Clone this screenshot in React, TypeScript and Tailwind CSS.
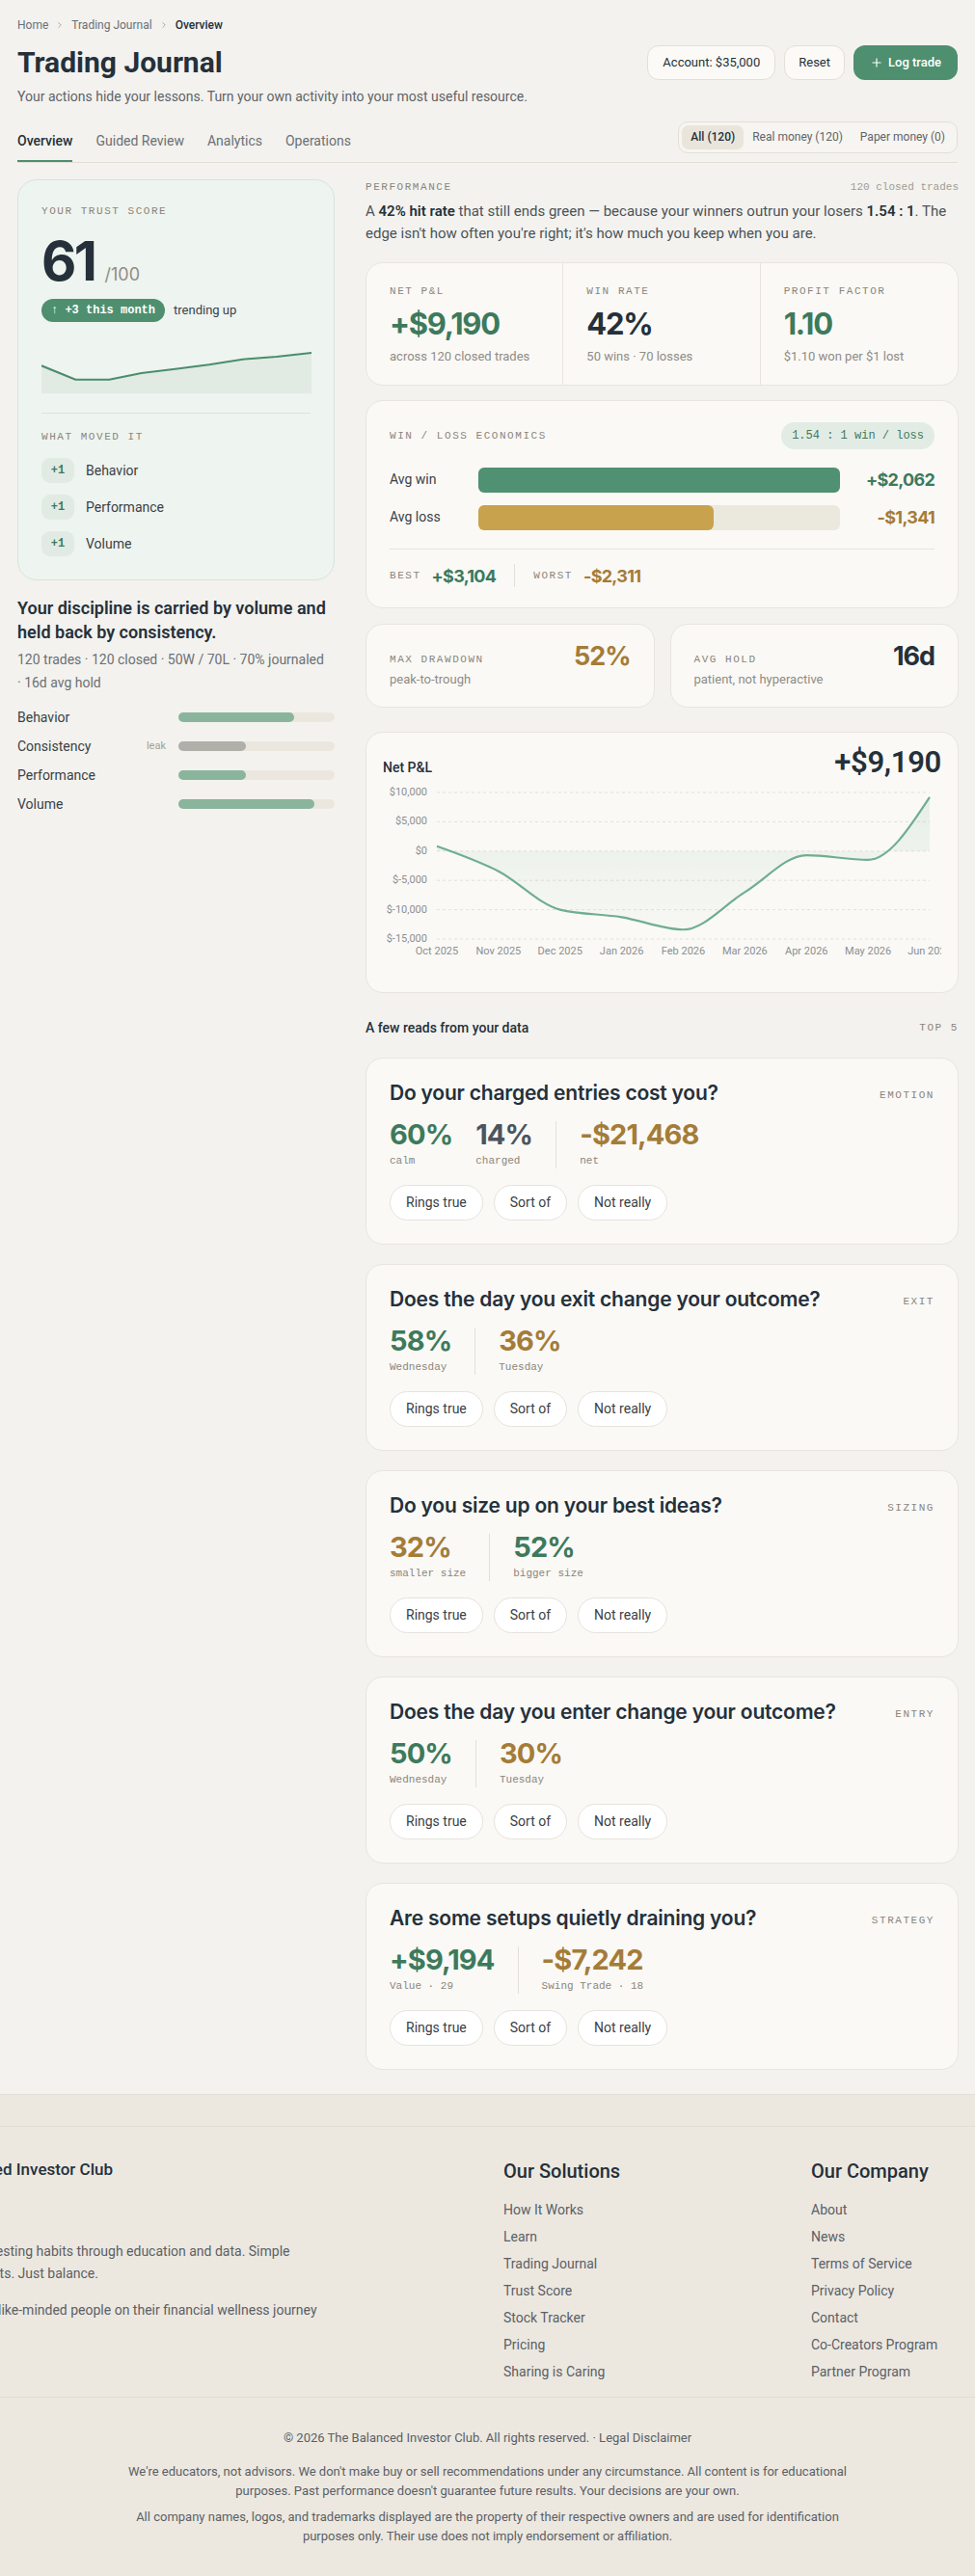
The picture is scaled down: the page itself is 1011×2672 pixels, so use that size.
import { ChevronRight, Plus } from 'lucide-react';

const mono = "font-['Liberation_Mono',monospace]";
const num = "font-['Inter',sans-serif]";

const green = 'text-[#3d7a5c]';
const gold = 'text-[#a47c38]';
const slate = 'text-[#4a5560]';

const moved = ['Behavior', 'Performance', 'Volume'];

const discipline = [
  { name: 'Behavior', pct: 74, fill: 'bg-[#8ab59c]', leak: false },
  { name: 'Consistency', pct: 43, fill: 'bg-[#b1afaa]', leak: true },
  { name: 'Performance', pct: 43, fill: 'bg-[#8ab59c]', leak: false },
  { name: 'Volume', pct: 87, fill: 'bg-[#8ab59c]', leak: false },
];

const reads = [
  {
    q: 'Do your charged entries cost you?',
    tag: 'EMOTION',
    groups: [
      [
        { v: '60%', l: 'calm', c: green },
        { v: '14%', l: 'charged', c: slate },
      ],
      [{ v: '-$21,468', l: 'net', c: gold }],
    ],
  },
  {
    q: 'Does the day you exit change your outcome?',
    tag: 'EXIT',
    groups: [[{ v: '58%', l: 'Wednesday', c: green }], [{ v: '36%', l: 'Tuesday', c: gold }]],
  },
  {
    q: 'Do you size up on your best ideas?',
    tag: 'SIZING',
    groups: [[{ v: '32%', l: 'smaller size', c: gold }], [{ v: '52%', l: 'bigger size', c: green }]],
  },
  {
    q: 'Does the day you enter change your outcome?',
    tag: 'ENTRY',
    groups: [[{ v: '50%', l: 'Wednesday', c: green }], [{ v: '30%', l: 'Tuesday', c: gold }]],
  },
  {
    q: 'Are some setups quietly draining you?',
    tag: 'STRATEGY',
    groups: [[{ v: '+$9,194', l: 'Value · 29', c: green }], [{ v: '-$7,242', l: 'Swing Trade · 18', c: gold }]],
  },
];

const solutions = ['How It Works', 'Learn', 'Trading Journal', 'Trust Score', 'Stock Tracker', 'Pricing', 'Sharing is Caring'];
const company = ['About', 'News', 'Terms of Service', 'Privacy Policy', 'Contact', 'Co-Creators Program', 'Partner Program'];

// chart geometry (svg coords)
const months = ['Oct 2025', 'Nov 2025', 'Dec 2025', 'Jan 2026', 'Feb 2026', 'Mar 2026', 'Apr 2026', 'May 2026', 'Jun 2026'];
const pnl = [840, -3440, -10000, -11270, -13400, -7000, -700, -1500, 9190];
const ticks = [10000, 5000, 0, -5000, -10000, -15000];
const X = (i: number) => 56 + i * 63.875;
const Y = (v: number) => 10 + (10000 - v) * 0.00608;

function monotone(pts: [number, number][]) {
  const n = pts.length;
  const h: number[] = [];
  const s: number[] = [];
  const t: number[] = new Array(n).fill(0);
  for (let i = 0; i < n - 1; i++) {
    h[i] = pts[i + 1][0] - pts[i][0];
    s[i] = (pts[i + 1][1] - pts[i][1]) / h[i];
  }
  for (let i = 1; i < n - 1; i++) {
    const p = (s[i - 1] * h[i] + s[i] * h[i - 1]) / (h[i - 1] + h[i]);
    t[i] = (Math.sign(s[i - 1]) + Math.sign(s[i])) * Math.min(Math.abs(s[i - 1]), Math.abs(s[i]), 0.5 * Math.abs(p)) || 0;
  }
  t[0] = (3 * s[0] - t[1]) / 2;
  t[n - 1] = (3 * s[n - 2] - t[n - 2]) / 2;
  let d = `M${pts[0][0]},${pts[0][1]}`;
  for (let i = 0; i < n - 1; i++) {
    const dx = h[i] / 3;
    d += ` C${pts[i][0] + dx},${pts[i][1] + dx * t[i]} ${pts[i + 1][0] - dx},${pts[i + 1][1] - dx * t[i + 1]} ${pts[i + 1][0]},${pts[i + 1][1]}`;
  }
  return d;
}

function PnlChart() {
  const pts = pnl.map((v, i) => [X(i), Y(v)] as [number, number]);
  const line = monotone(pts);
  const area = `${line} L${X(8)},${Y(0)} L${X(0)},${Y(0)} Z`;
  const fmt = (v: number) => (v < 0 ? `$-${Math.abs(v).toLocaleString('en-US')}` : `$${v.toLocaleString('en-US')}`);
  return (
    <svg width="579" height="190" className="mt-[3px] block">
      <defs>
        <linearGradient id="pnlFill" x1="0" y1="0" x2="0" y2="1">
          <stop offset="0" stopColor="#6fae8f" stopOpacity="0.14" />
          <stop offset="1" stopColor="#6fae8f" stopOpacity="0.02" />
        </linearGradient>
      </defs>
      {ticks.map((v) => (
        <g key={v}>
          <line x1="56" x2="567" y1={Y(v)} y2={Y(v)} stroke="#e3e0d9" strokeDasharray="3 3" />
          <text x="46" y={Y(v)} textAnchor="end" dominantBaseline="middle" fontSize="11" fill="#8d8f91" fontFamily="Roboto">
            {fmt(v)}
          </text>
        </g>
      ))}
      <path d={area} fill="url(#pnlFill)" />
      <path d={line} fill="none" stroke="#6fae8f" strokeWidth="2.2" />
      {months.map((m, i) => (
        <text key={m} x={X(i)} y="175" textAnchor="middle" dominantBaseline="middle" fontSize="11" fill="#8d8f91" fontFamily="Roboto">
          {m}
        </text>
      ))}
    </svg>
  );
}

function Sparkline() {
  const pts = [
    [0, 23.3], [35.3, 37.7], [70.3, 37.7], [103.7, 31], [138.7, 26.7], [173.7, 22.3], [208.7, 16.7], [243.7, 14], [280, 10],
  ];
  const d = pts.map((p) => p.join(',')).join(' ');
  return (
    <svg width="280" height="52" className="mt-[22px] block">
      <polygon points={`${d} 280,52 0,52`} fill="#e1ebe4" />
      <polyline points={d} fill="none" stroke="#4a8d6c" strokeWidth="2" strokeLinejoin="round" />
    </svg>
  );
}

function Label({ children, className = '' }: { children: React.ReactNode; className?: string }) {
  return <div className={`${mono} text-[11px] leading-4 tracking-[0.14em] text-[#8b857b] ${className}`}>{children}</div>;
}

function LeftColumn() {
  return (
    <div>
      <div className="rounded-[20px] border border-[#d5e5da] bg-[#eef4ef] p-6">
        <Label>YOUR TRUST SCORE</Label>
        <div className="mt-[16px] flex items-baseline">
          <span className={`${num} text-[56px] leading-[56px] font-bold tracking-[-0.045em] text-[#25303a]`}>61</span>
          <span className={`${num} ml-[10px] text-[18px] text-[#928c83]`}>/100</span>
        </div>
        <div className="mt-[11px] flex items-center">
          <span className={`${mono} rounded-full bg-[#4e8f6f] px-[10px] text-[12px] leading-6 font-bold text-white`}>↑ +3 this month</span>
          <span className="ml-[9px] text-[13px] text-[#3a4147]">trending up</span>
        </div>
        <Sparkline />
        <div className="mt-[20px] border-t border-[#d9e5dc]" />
        <Label className="mt-[16px]">WHAT MOVED IT</Label>
        <div className="mt-[14px] flex flex-col gap-[12px]">
          {moved.map((m) => (
            <div key={m} className="flex items-center">
              <span className={`${mono} flex h-[26px] w-[34px] items-center justify-center rounded-[9px] bg-[#e1ebe4] text-[12px] font-bold text-[#3d7a5c]`}>+1</span>
              <span className="ml-[12px] text-[14px] text-[#3a4147]">{m}</span>
            </div>
          ))}
        </div>
      </div>
      <h2 className="mt-[16px] text-[18px] leading-[25px] font-semibold text-[#25303a]">
        Your discipline is carried by volume and held back by consistency.
      </h2>
      <p className="mt-[4px] text-[14px] leading-6 text-[#6b7075]">
        120 trades · 120 closed · 50W / 70L · 70% journaled <span className="whitespace-nowrap">· 16d avg hold</span>
      </p>
      <div className="mt-[14px] flex flex-col gap-[10px]">
        {discipline.map((d) => (
          <div key={d.name} className="flex h-5 items-center">
            <span className="flex-1 text-[14px] text-[#3a4147]">{d.name}</span>
            {d.leak && <span className="mr-[13px] text-[11px] text-[#a3a09a]">leak</span>}
            <div className="h-[10px] w-[162px] rounded-full bg-[#ebe7df]">
              <div className={`h-full rounded-full ${d.fill}`} style={{ width: `${d.pct}%` }} />
            </div>
          </div>
        ))}
      </div>
    </div>
  );
}

function Card({ children, className = '' }: { children: React.ReactNode; className?: string }) {
  return <div className={`rounded-[18px] border border-[#e8e5de] bg-[#faf9f6] ${className}`}>{children}</div>;
}

function ReadCard({ r }: { r: (typeof reads)[number] }) {
  return (
    <Card className="px-6 pt-[22px] pb-[24px]">
      <div className="flex items-center justify-between">
        <h3 className={`${num} text-[21px] leading-[28px] font-semibold tracking-[-0.01em] text-[#25303a]`}>{r.q}</h3>
        <span className={`${mono} mt-[4px] text-[11px] tracking-[0.14em] text-[#8b857b]`}>{r.tag}</span>
      </div>
      <div className="mt-[15px] flex">
        {r.groups.map((g, gi) => (
          <div key={gi} className={`flex gap-6 pr-6 ${gi > 0 ? 'border-l border-[#e3e0d9] pl-6' : ''}`}>
            {g.map((s) => (
              <div key={s.v}>
                <div className={`${num} text-[29px] leading-[28px] font-bold tracking-[-0.03em] ${s.c}`}>{s.v}</div>
                <div className={`${mono} mt-[5px] text-[11px] leading-4 text-[#8b857b]`}>{s.l}</div>
              </div>
            ))}
          </div>
        ))}
      </div>
      <div className="mt-[17px] flex gap-[11px]">
        {['Rings true', 'Sort of', 'Not really'].map((b) => (
          <button key={b} className="h-[37px] rounded-full border border-[#e6e3dc] bg-white px-[16px] text-[14px] text-[#3a4147]">
            {b}
          </button>
        ))}
      </div>
    </Card>
  );
}

function RightColumn() {
  return (
    <div>
      <div className="flex items-center justify-between">
        <Label>PERFORMANCE</Label>
        <span className={`${mono} text-[11px] leading-4 text-[#a19c93]`}>120 closed trades</span>
      </div>
      <p className="mt-[6px] text-[15px] leading-[23px] text-[#4b5359]">
        A <b className="font-semibold text-[#25303a]">42% hit rate</b> that still ends green — because your winners outrun your losers{' '}
        <b className="font-semibold text-[#25303a]">1.54 : 1</b>. The edge isn't how often you're right; it's how much you keep when you are.
      </p>

      <Card className="mt-[18px] grid grid-cols-3 divide-x divide-[#e8e5de]">
        {[
          { l: 'NET P&L', v: '+$9,190', c: green, s: 'across 120 closed trades' },
          { l: 'WIN RATE', v: '42%', c: 'text-[#25303a]', s: '50 wins · 70 losses' },
          { l: 'PROFIT FACTOR', v: '1.10', c: green, s: '$1.10 won per $1 lost' },
        ].map((k) => (
          <div key={k.l} className="px-6 pt-[21px] pb-[19px]">
            <Label>{k.l}</Label>
            <div className={`${num} mt-[10px] text-[31px] leading-[32px] font-bold tracking-[-0.04em] ${k.c}`}>{k.v}</div>
            <div className="mt-[8px] text-[13px] leading-5 text-[#8f8c85]">{k.s}</div>
          </div>
        ))}
      </Card>

      <Card className="mt-[15px] px-6 pt-[22px] pb-[21px]">
        <div className="flex items-center justify-between">
          <Label>WIN / LOSS ECONOMICS</Label>
          <span className={`${mono} rounded-full bg-[#e2ece5] px-[11px] text-[12px] leading-[28px] text-[#3d7a5c]`}>1.54 : 1 win / loss</span>
        </div>
        <div className="mt-[18px] flex flex-col gap-[12px]">
          {[
            { l: 'Avg win', pct: 100, fill: 'bg-[#4f9172]', v: '+$2,062', c: green },
            { l: 'Avg loss', pct: 65, fill: 'bg-[#c9a24e]', v: '-$1,341', c: gold },
          ].map((r) => (
            <div key={r.l} className="flex items-center">
              <span className="w-[92px] text-[14px] text-[#3a4147]">{r.l}</span>
              <div className="h-[26px] flex-1 rounded-[6px] bg-[#ebe8de]">
                <div className={`h-full rounded-[6px] ${r.fill}`} style={{ width: `${r.pct}%` }} />
              </div>
              <span className={`${num} w-[98px] text-right text-[18px] font-bold tracking-[-0.04em] ${r.c}`}>{r.v}</span>
            </div>
          ))}
        </div>
        <div className="mt-[19px] border-t border-[#e8e5de]" />
        <div className="mt-[15px] flex h-6 items-center">
          <Label>BEST</Label>
          <span className={`${num} ml-[11px] text-[18px] font-bold tracking-[-0.04em] ${green}`}>+$3,104</span>
          <div className="mx-[19px] h-6 border-l border-[#e3e0d9]" />
          <Label>WORST</Label>
          <span className={`${num} ml-[11px] text-[18px] font-bold tracking-[-0.04em] ${gold}`}>-$2,311</span>
        </div>
      </Card>

      <div className="mt-[16px] grid grid-cols-2 gap-4">
        {[
          { l: 'MAX DRAWDOWN', s: 'peak-to-trough', v: '52%', c: gold },
          { l: 'AVG HOLD', s: 'patient, not hyperactive', v: '16d', c: 'text-[#25303a]' },
        ].map((k) => (
          <Card key={k.l} className="flex items-start justify-between px-6 pt-[19px] pb-[18px]">
            <div className="mt-[9px]">
              <Label>{k.l}</Label>
              <div className="mt-[3px] text-[13px] leading-5 text-[#8f8c85]">{k.s}</div>
            </div>
            <span className={`${num} text-[27px] leading-[27px] font-bold tracking-[-0.04em] ${k.c}`}>{k.v}</span>
          </Card>
        ))}
      </div>

      <Card className="mt-[25px] h-[271px] overflow-hidden px-[17px] pt-[13px]">
        <div className="flex items-center justify-between">
          <span className="mt-[10px] text-[14px] font-medium text-[#25303a]">Net P&amp;L</span>
          <span className="text-[31px] leading-[36px] font-semibold tracking-[-0.01em] text-[#25303a]">+$9,190</span>
        </div>
        <PnlChart />
      </Card>

      <div className="mt-[26px] flex items-center justify-between">
        <span className="text-[14px] leading-5 font-medium text-[#25303a]">A few reads from your data</span>
        <span className={`${mono} text-[11px] tracking-[0.14em] text-[#8b857b]`}>TOP 5</span>
      </div>
      <div className="mt-[21px] flex flex-col gap-[20px]">
        {reads.map((r) => (
          <ReadCard key={r.q} r={r} />
        ))}
      </div>
    </div>
  );
}

function Footer() {
  return (
    <footer className="border-t border-[#e2ded5] bg-[#ece8e0] text-[#5b6066]">
      <div className="mt-[32px] border-t border-[#e2ded5]">
        <div className="flex overflow-hidden pt-[32px] pb-[16px]">
          <div className="ml-[-91px] w-[613px] shrink-0">
            <div className="text-[17px] leading-6 font-medium text-[#25303a]">The Balanced Investor Club</div>
            <div className="mt-[62px] text-[14px] leading-[23px] whitespace-nowrap">
              <div className="ml-[7px]">Fostering investing habits through education and data. Simple</div>
              <div className="ml-[13px]">smart insights. Just balance.</div>
            </div>
            <div className="mt-[15px] ml-[4px] text-[14px] leading-[23px] whitespace-nowrap">
              Connect with like-minded people on their financial wellness journey
            </div>
          </div>
          <div className="w-[319px] shrink-0">
            <div className="text-[20px] leading-7 font-medium text-[#25303a]">Our Solutions</div>
            <ul className="mt-[16px] flex flex-col gap-[8px] text-[14px] leading-5">
              {solutions.map((s) => (
                <li key={s}>{s}</li>
              ))}
            </ul>
          </div>
          <div>
            <div className="text-[20px] leading-7 font-medium text-[#25303a]">Our Company</div>
            <ul className="mt-[16px] flex flex-col gap-[8px] text-[14px] leading-5">
              {company.map((s) => (
                <li key={s}>{s}</li>
              ))}
            </ul>
          </div>
        </div>
      </div>
      <div className="border-t border-[#e2ded5] pt-[34px] pb-[31px] text-center text-[13px]">
        <div className="leading-4">© 2026 The Balanced Investor Club. All rights reserved. · Legal Disclaimer</div>
        <p className="mx-auto mt-[17px] max-w-[760px] leading-5">
          We're educators, not advisors. We don't make buy or sell recommendations under any circumstance. All content is for educational purposes. Past
          performance doesn't guarantee future results. Your decisions are your own.
        </p>
        <p className="mx-auto mt-[7px] max-w-[760px] leading-5">
          All company names, logos, and trademarks displayed are the property of their respective owners and are used for identification purposes only.
          Their use does not imply endorsement or affiliation.
        </p>
      </div>
    </footer>
  );
}

export default function App() {
  return (
    <div className="min-h-screen bg-[#f3f2ee] font-['Roboto',sans-serif] text-[#25303a]">
      <div className="px-[18px] pt-[18px] pb-[25px]">
        <nav className="flex items-center gap-[7px] text-[12px] leading-4 text-[#6b7075]">
          <span>Home</span>
          <ChevronRight size={10} className="text-[#a19c93]" />
          <span>Trading Journal</span>
          <ChevronRight size={10} className="text-[#a19c93]" />
          <span className="font-medium text-[#25303a]">Overview</span>
        </nav>

        <div className="mt-[13px] flex items-center justify-between">
          <h1 className="text-[30px] leading-[36px] font-bold text-[#25303a]">Trading Journal</h1>
          <div className="flex gap-[9px] text-[13px]">
            <button className="h-[36px] rounded-[12px] border border-[#e3dfd6] bg-[#fbfaf7] px-[15px] text-[#25303a]">Account: $35,000</button>
            <button className="h-[36px] rounded-[12px] border border-[#e3dfd6] bg-[#fbfaf7] px-[14px] text-[#25303a]">Reset</button>
            <button className="flex h-[36px] items-center gap-[5px] rounded-[12px] bg-[#4e8f6f] px-[17px] font-medium text-white">
              <Plus size={14} strokeWidth={2} />
              Log trade
            </button>
          </div>
        </div>
        <p className="mt-[7px] text-[14px] leading-5 text-[#5e646a]">
          Your actions hide your lessons. Turn your own activity into your most useful resource.
        </p>

        <div className="mt-[16px] flex items-end justify-between border-b border-[#e2ded5]">
          <div className="flex gap-6 text-[14px] leading-5">
            {['Overview', 'Guided Review', 'Analytics', 'Operations'].map((t, i) => (
              <span
                key={t}
                className={`border-b-2 pb-[10px] ${i === 0 ? 'border-[#4e8f6f] font-medium text-[#25303a]' : 'border-transparent text-[#6b7075]'}`}
              >
                {t}
              </span>
            ))}
          </div>
          <div className="mb-[9px] flex rounded-[10px] border border-[#e3dfd6] bg-[#f6f5f1] p-[3px] text-[12px] leading-[15px]">
            <span className="rounded-[7px] bg-[#e9e5dc] px-[9px] py-[5px] font-medium text-[#25303a]">All (120)</span>
            <span className="px-[9px] py-[5px] text-[#5e646a]">Real money (120)</span>
            <span className="px-[9px] py-[5px] text-[#5e646a]">Paper money (0)</span>
          </div>
        </div>

        <div className="mt-[17px] grid grid-cols-[329px_1fr] items-start gap-[32px]">
          <LeftColumn />
          <RightColumn />
        </div>
      </div>
      <Footer />
    </div>
  );
}
